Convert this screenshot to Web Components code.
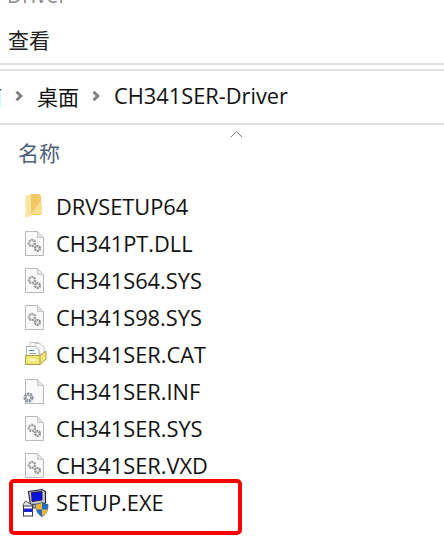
<!DOCTYPE html>
<html lang="zh">
<head>
<meta charset="utf-8">
<title>CH341SER-Driver</title>
<style>
html, body { margin: 0; background: #fff; }
body { width: 444px; height: 558px; overflow: hidden; font-family: "Open Sans", "Noto Sans CJK SC", sans-serif; }
</style>
</head>
<body>
<explorer-window>
  <explorer-ribbon></explorer-ribbon>
  <explorer-path></explorer-path>
  <explorer-header></explorer-header>
  <file-list>
    <file-row icon="folder">DRVSETUP64</file-row>
    <file-row icon="sys">CH341PT.DLL</file-row>
    <file-row icon="sys">CH341S64.SYS</file-row>
    <file-row icon="sys">CH341S98.SYS</file-row>
    <file-row icon="cat">CH341SER.CAT</file-row>
    <file-row icon="inf">CH341SER.INF</file-row>
    <file-row icon="sys">CH341SER.SYS</file-row>
    <file-row icon="sys">CH341SER.VXD</file-row>
    <file-row icon="exe" marked>SETUP.EXE</file-row>
  </file-list>
</explorer-window>

<script>
const FONT = '"Open Sans", "Noto Sans CJK SC", sans-serif';
const CJK = '"Noto Sans CJK SC", "Open Sans", sans-serif';
const CHEVRON = '<path d="M2.500 1.800 6.800 6 2.500 10.200" fill="none" stroke="#808080" stroke-width="3"/>';

class ExplorerWindow extends HTMLElement {
  constructor() {
    super();
    this.attachShadow({ mode: 'open' }).innerHTML = `
<style>
:host { display: flex; flex-direction: column; width: 444px; height: 558px; overflow: hidden; color: #111; }
</style>
<slot></slot>`;
  }
}

class ExplorerRibbon extends HTMLElement {
  constructor() {
    super();
    this.attachShadow({ mode: 'open' }).innerHTML = `
<style>
:host { display: block; height: 71px; box-sizing: border-box; border-bottom: 2px solid #e0e0e0; overflow: hidden; }
.clip { height: 4px; overflow: hidden; padding-left: 7px; color: #8c8c8c; font: 21px/18px ${FONT}; }
.clip span { display: block; margin-top: -14px; }
.tab { margin: 0 0 0 8px; padding-top: 19px; font: 21px/32px ${CJK}; color: #222; }
.rule { height: 2px; background: #e0e0e0; margin-top: 8px; }
</style>
<div class="clip"><span>Driver</span></div>
<div class="tab">查看</div>
<div class="rule"></div>`;
  }
}

class ExplorerPath extends HTMLElement {
  constructor() {
    super();
    this.attachShadow({ mode: 'open' }).innerHTML = `
<style>
:host { display: flex; align-items: center; height: 54px; box-sizing: border-box; padding-bottom: 2px; border-bottom: 2px solid #e0e0e0; overflow: hidden; color: #111; }
.cut { width: 2px; overflow: hidden; font: 21px/30px ${CJK}; direction: rtl; }
svg { flex: none; }
.a { margin-left: 12px; }
.b { margin-left: 13px; font: 21px/30px ${CJK}; }
.c { margin-left: 12px; }
.d { margin-left: 13px; font: 21.800px/30px ${FONT}; white-space: nowrap; }
</style>
<span class="cut">面</span>
<svg class="a" width="10" height="12" viewBox="0 0 10 12">${CHEVRON}</svg>
<span class="b">桌面</span>
<svg class="c" width="10" height="12" viewBox="0 0 10 12">${CHEVRON}</svg>
<span class="d">CH341SER-Driver</span>`;
  }
}

class ExplorerHeader extends HTMLElement {
  constructor() {
    super();
    this.attachShadow({ mode: 'open' }).innerHTML = `
<style>
:host { display: block; position: relative; height: 63px; box-sizing: border-box; padding: 11px 0 0 18px; }
.name { font: 21px/32px ${CJK}; color: #4c607a; }
svg { position: absolute; left: 230px; top: 5px; }
</style>
<div class="name">名称</div>
<svg width="13" height="8" viewBox="0 0 13 8"><path d="M1 7 6.500 1.500 12 7" fill="none" stroke="#777" stroke-width="1"/></svg>`;
  }
}

class FileList extends HTMLElement {
  constructor() {
    super();
    this.attachShadow({ mode: 'open' }).innerHTML = `
<style>
:host { display: flex; flex-direction: column; }
</style>
<slot></slot>`;
  }
}

const page = (inner) => `
<path d="M3.500 1.500H15.500L21.500 7.500V25.500H3.500Z" fill="#fafafa" stroke="#b8b8b8"/>
<path d="M15.500 1.500V7.500H21.500Z" fill="#e4e4e4" stroke="#c8c8c8"/>${inner}`;

const gears = `
<circle cx="10" cy="13" r="3" fill="none" stroke="#a2a2a2" stroke-width="2.600" stroke-dasharray="2 .6"/>
<circle cx="15.500" cy="18.500" r="2.400" fill="none" stroke="#8f8f8f" stroke-width="2.400" stroke-dasharray="1.700 .6"/>`;

const ICONS = {
  folder: `
<path d="M8 1H17L19 3V22H8Z" fill="#f2c964"/>
<path d="M17 10H20V21H9Z" fill="#fbe08f"/>
<path d="M3.500 3 9 1V23L3.500 25Z" fill="#fbe3a4"/>`,
  sys: page(gears),
  cat: `
<path d="M8 1.500H16L20 5V14H8Z" fill="#fff" stroke="#c0c0c0"/>
<path d="M13 2.500H18L22 6V13H13Z" fill="#f6f6f6" stroke="#c8c8c8"/>
<path d="M4.500 5.500H13L17 9V15H4.500Z" fill="#fff" stroke="#b0b0b0"/>
<path d="M7 9.500H12" stroke="#4a90d0" stroke-width="1.200"/>
<path d="M7 12.500H14" stroke="#a0a0a0"/>
<path d="M3.500 14.500H18L24 10V18L18 23.500H3.500Z" fill="#f0e678" stroke="#a8a040"/>
<path d="M18 14.500V23.500" stroke="#b0a840"/>
<path d="M6 19H15" stroke="#fffbd0" stroke-width="1.500"/>`,
  inf: page(`
<circle cx="6.500" cy="19.500" r="3.400" fill="none" stroke="#8d99a6" stroke-width="3.400" stroke-dasharray="2.200 .6"/>`),
  exe: `
<path d="M6.500 2.500 20 .5 23.500 2.500V14L20 16.500H8.500Z" fill="#c4c4d0" stroke="#1e1e2a" stroke-width="1.100"/>
<path d="M9.500 3.500 20 2.500V11L10 12.500Z" fill="#0a14e0" stroke="#15152a" stroke-width=".8"/>
<path d="M8 15.500 18 15 15 19H6Z" fill="#a8a8b4" stroke="#1e1e2a" stroke-width=".8"/>
<path d="M.8 16 3.500 12 7.500 14.500 11 16 10.500 18H2Z" fill="#dfe3e8" stroke="#30303a" stroke-width=".8"/>
<rect x="1.500" y="17" width="9" height="10" fill="#fff" stroke="#26262e" stroke-width=".9"/>
<rect x="2" y="19.500" width="8" height="3.500" fill="#1a22d0"/>
<path d="M14 15.500C16.500 15.500 18.500 14.500 20 13 21.500 14.500 23.500 15.500 26 15.500 26 21 24.500 25.500 20 27.500 15.500 25.500 14 21 14 15.500Z" fill="#1f6fc8" stroke="#2a4a70" stroke-width=".7"/>
<path d="M20 13.600V20.500H14.400C14.100 19 14 17 14 15.500 16.500 15.500 18.500 14.800 20 13.600Z" fill="#f2b632"/>
<path d="M20 20.500H25.500C25 23.500 23 26 20 27.200Z" fill="#f2b632"/>`
};

class FileRow extends HTMLElement {
  constructor() {
    super();
    this.attachShadow({ mode: 'open' }).innerHTML = `
<style>
:host { display: flex; align-items: center; position: relative; height: 37px; padding-left: 22px; font: 21.800px/37px ${FONT}; color: #111; white-space: nowrap; }
svg { flex: none; width: 25px; height: 27px; margin-right: 9px; overflow: visible; }
.mark { display: none; position: absolute; left: 9px; top: -5px; width: 233px; height: 56px; box-sizing: border-box; border: 4px solid #fa0000; border-radius: 5px; }
:host([marked]) .mark { display: block; }
:host([marked]) svg { width: 30px; height: 28px; margin-right: 4px; }
</style>
<svg viewBox="0 0 25 27"></svg>
<slot></slot>
<div class="mark"></div>`;
  }

  connectedCallback() {
    const svg = this.shadowRoot.querySelector('svg');
    const icon = this.getAttribute('icon');
    if (icon === 'exe') svg.setAttribute('viewBox', '0 0 30 28');
    svg.innerHTML = ICONS[icon] || '';
  }
}

customElements.define('explorer-window', ExplorerWindow);
customElements.define('explorer-ribbon', ExplorerRibbon);
customElements.define('explorer-path', ExplorerPath);
customElements.define('explorer-header', ExplorerHeader);
customElements.define('file-list', FileList);
customElements.define('file-row', FileRow);
</script>
</body>
</html>
